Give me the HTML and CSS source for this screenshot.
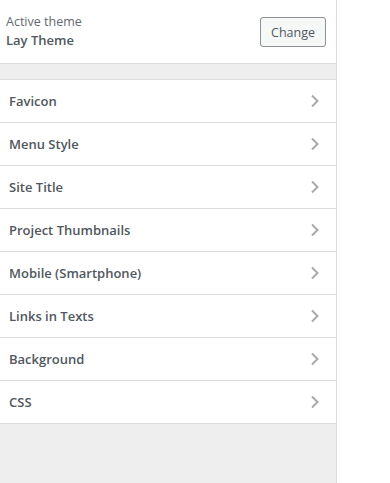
FILE: index.html
```html
<!DOCTYPE html>
<html lang="en">
<head>
    <meta charset="UTF-8">
    <meta name="viewport" content="width=device-width, initial-scale=1.0">
    <title>Customize</title>
    <link rel="stylesheet" href="styles.css">
</head>
<body>
    <div class="page">
        <!-- Customizer Sidebar -->
        <div class="sidebar">
            <div class="theme-info">
                <div class="theme-name">
                    <span class="theme-label">Active theme</span>
                    <strong>Lay Theme</strong>
                </div>
                <button type="button" class="change-btn">Change</button>
            </div>
            <div class="spacer"></div>
            <ul class="sections">
                <li>Favicon <svg class="chevron" viewBox="0 0 10 14"><path d="M2 1.5l5.5 5.5L2 12.5"/></svg></li>
                <li>Menu Style <svg class="chevron" viewBox="0 0 10 14"><path d="M2 1.5l5.5 5.5L2 12.5"/></svg></li>
                <li>Site Title <svg class="chevron" viewBox="0 0 10 14"><path d="M2 1.5l5.5 5.5L2 12.5"/></svg></li>
                <li>Project Thumbnails <svg class="chevron" viewBox="0 0 10 14"><path d="M2 1.5l5.5 5.5L2 12.5"/></svg></li>
                <li>Mobile (Smartphone) <svg class="chevron" viewBox="0 0 10 14"><path d="M2 1.5l5.5 5.5L2 12.5"/></svg></li>
                <li>Links in Texts <svg class="chevron" viewBox="0 0 10 14"><path d="M2 1.5l5.5 5.5L2 12.5"/></svg></li>
                <li>Background <svg class="chevron" viewBox="0 0 10 14"><path d="M2 1.5l5.5 5.5L2 12.5"/></svg></li>
                <li>CSS <svg class="chevron" viewBox="0 0 10 14"><path d="M2 1.5l5.5 5.5L2 12.5"/></svg></li>
            </ul>
        </div>
        <!-- Preview -->
        <div class="preview"></div>
    </div>
</body>
</html>
```

FILE: styles.css
```css
/* General Styles */
body {
    margin: 0;
    font-family: "Open Sans", "Noto Sans", sans-serif;
    background: #fff;
    color: #50575e;
    height: 483px;
    overflow: hidden;
}

.page {
    display: flex;
    height: 100%;
}

/* Sidebar */
.sidebar {
    width: 336px;
    flex-shrink: 0;
    background: #eee;
    border-right: 1px solid #dcdcde;
    display: flex;
    flex-direction: column;
}

.theme-info {
    background: #fff;
    height: 64px;
    box-sizing: border-box;
    padding: 0 10px 0 6px;
    display: flex;
    align-items: center;
    justify-content: space-between;
    border-bottom: 1px solid #dcdcde;
}

.theme-name {
    display: flex;
    flex-direction: column;
    font-size: 12.5px;
    line-height: 18px;
    margin-top: -1px;
}

.theme-label {
    color: #646970;
}

.theme-name strong {
    font-size: 13px;
    font-weight: 600;
    color: #50575e;
}

.change-btn {
    font-family: inherit;
    font-size: 12.5px;
    color: #50575e;
    background: #f6f7f7;
    border: 1px solid #8c8f94;
    border-radius: 3px;
    width: 66px;
    height: 30px;
    padding: 0;
    margin-top: 1px;
}

.spacer {
    height: 15px;
    border-bottom: 1px solid #dcdcde;
}

/* Section list */
.sections {
    list-style: none;
    margin: 0;
    padding: 0;
}

.sections li {
    background: #fff;
    height: 43px;
    box-sizing: border-box;
    border-bottom: 1px solid #dcdcde;
    padding: 0 16px 0 9px;
    display: flex;
    align-items: center;
    justify-content: space-between;
    font-size: 13px;
    font-weight: 600;
    color: #50575e;
}

.chevron {
    width: 10px;
    height: 14px;
    fill: none;
    stroke: #a7aaad;
    stroke-width: 2;
}

.preview {
    flex: 1;
    background: #fff;
}
```
